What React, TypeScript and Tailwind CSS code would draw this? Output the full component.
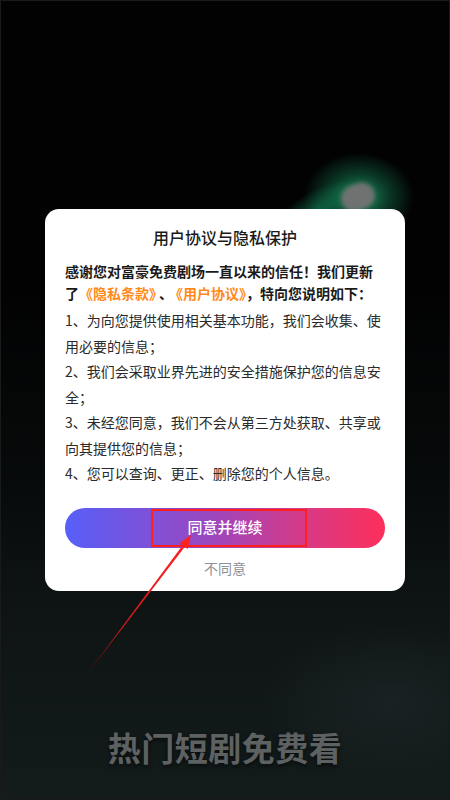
export default function App() {
  return (
    <div className="relative w-[450px] h-[800px] overflow-hidden border border-[#1a1a1a] bg-[linear-gradient(180deg,#020203_0%,#020203_35%,#070a0a_60%,#0f1515_78%,#131b1b_100%)] font-['Noto_Sans_CJK_SC','Noto_Sans',sans-serif]">
      {/* background glow */}
      <div className="absolute left-[303px] top-[152px] w-[110px] h-[88px] rounded-full bg-[radial-gradient(closest-side,rgba(30,170,110,0.85),rgba(20,120,80,0.45)_55%,rgba(0,0,0,0)_100%)]" />
      <div className="absolute left-[265px] top-[190px] w-[100px] h-[40px] rotate-[-30deg] rounded-full bg-[radial-gradient(closest-side,rgba(20,140,90,0.6),rgba(0,0,0,0))]" />
      <div className="absolute left-[340px] top-[183px] w-[34px] h-[26px] rotate-[-20deg] rounded-full bg-[#707272] blur-[2px]" />
      <div className="absolute left-[260px] top-[620px] w-[260px] h-[160px] rounded-full bg-[radial-gradient(closest-side,rgba(40,55,55,0.35),rgba(0,0,0,0))]" />

      <div className="relative flex flex-col items-center pt-[208px]">
        {/* dialog */}
        <div className="flex w-[360px] flex-col rounded-[14px] bg-white px-5 pt-4 pb-[13px]">
          <h1 className="text-center text-[16px] font-medium leading-[24px] text-[#1a1a1a]">用户协议与隐私保护</h1>
          <p className="mt-[11px] text-[14px] leading-[22px] font-bold text-[#1a1a1a]">
            感谢您对富豪免费剧场一直以来的信任！我们更新了<span className="text-[#ff8a1c]">《隐私条款》</span>
            <span className="px-[3px]">、</span>
            <span className="text-[#ff8a1c]">《用户协议》</span>，特向您说明如下：
          </p>
          <div className="mt-[4px] flex flex-col text-[14px] leading-[25.5px] text-[#2a2a2a]">
            <p>1、为向您提供使用相关基本功能，我们会收集、使用必要的信息；</p>
            <p>2、我们会采取业界先进的安全措施保护您的信息安全；</p>
            <p>3、未经您同意，我们不会从第三方处获取、共享或向其提供您的信息；</p>
            <p>4、您可以查询、更正、删除您的个人信息。</p>
          </div>
          <div className="mt-[21px] flex flex-col items-stretch gap-[10px]">
            <button className="flex h-[40px] w-full items-center justify-center rounded-full bg-[linear-gradient(90deg,#575ff9,#9a47c0_45%,#d83a86_75%,#fd2f5b)] text-[15px] font-medium text-white">
              同意并继续
            </button>
            <div className="text-center text-[14px] leading-[20px] text-[#8e9098]">不同意</div>
          </div>
        </div>

        <div className="mt-[134px] text-[33px] font-bold leading-[44px] tracking-[0.5px] text-[#5e6161] [text-shadow:0_2px_4px_rgba(0,0,0,0.6)]">
          热门短剧免费看
        </div>
      </div>

      {/* annotation */}
      <div className="absolute left-[150px] top-[508px] w-[156px] h-[38px] border-2 border-[#ff1f1f]" />
      <svg className="absolute left-0 top-0" width="450" height="800" viewBox="0 0 450 800">
        <defs>
          <linearGradient id="arr" x1="90" y1="668" x2="190" y2="535" gradientUnits="userSpaceOnUse">
            <stop offset="0" stopColor="#5a0a0a" />
            <stop offset="0.35" stopColor="#e01818" />
            <stop offset="1" stopColor="#ff2020" />
          </linearGradient>
        </defs>
        <polygon points="184.6,544.8 182.4,543.2 89.8,667.9 90.2,668.1" fill="url(#arr)" />
        <polygon points="190,534 186.8,548 178.8,542" fill="#ff2020" />
      </svg>
    </div>
  )
}
